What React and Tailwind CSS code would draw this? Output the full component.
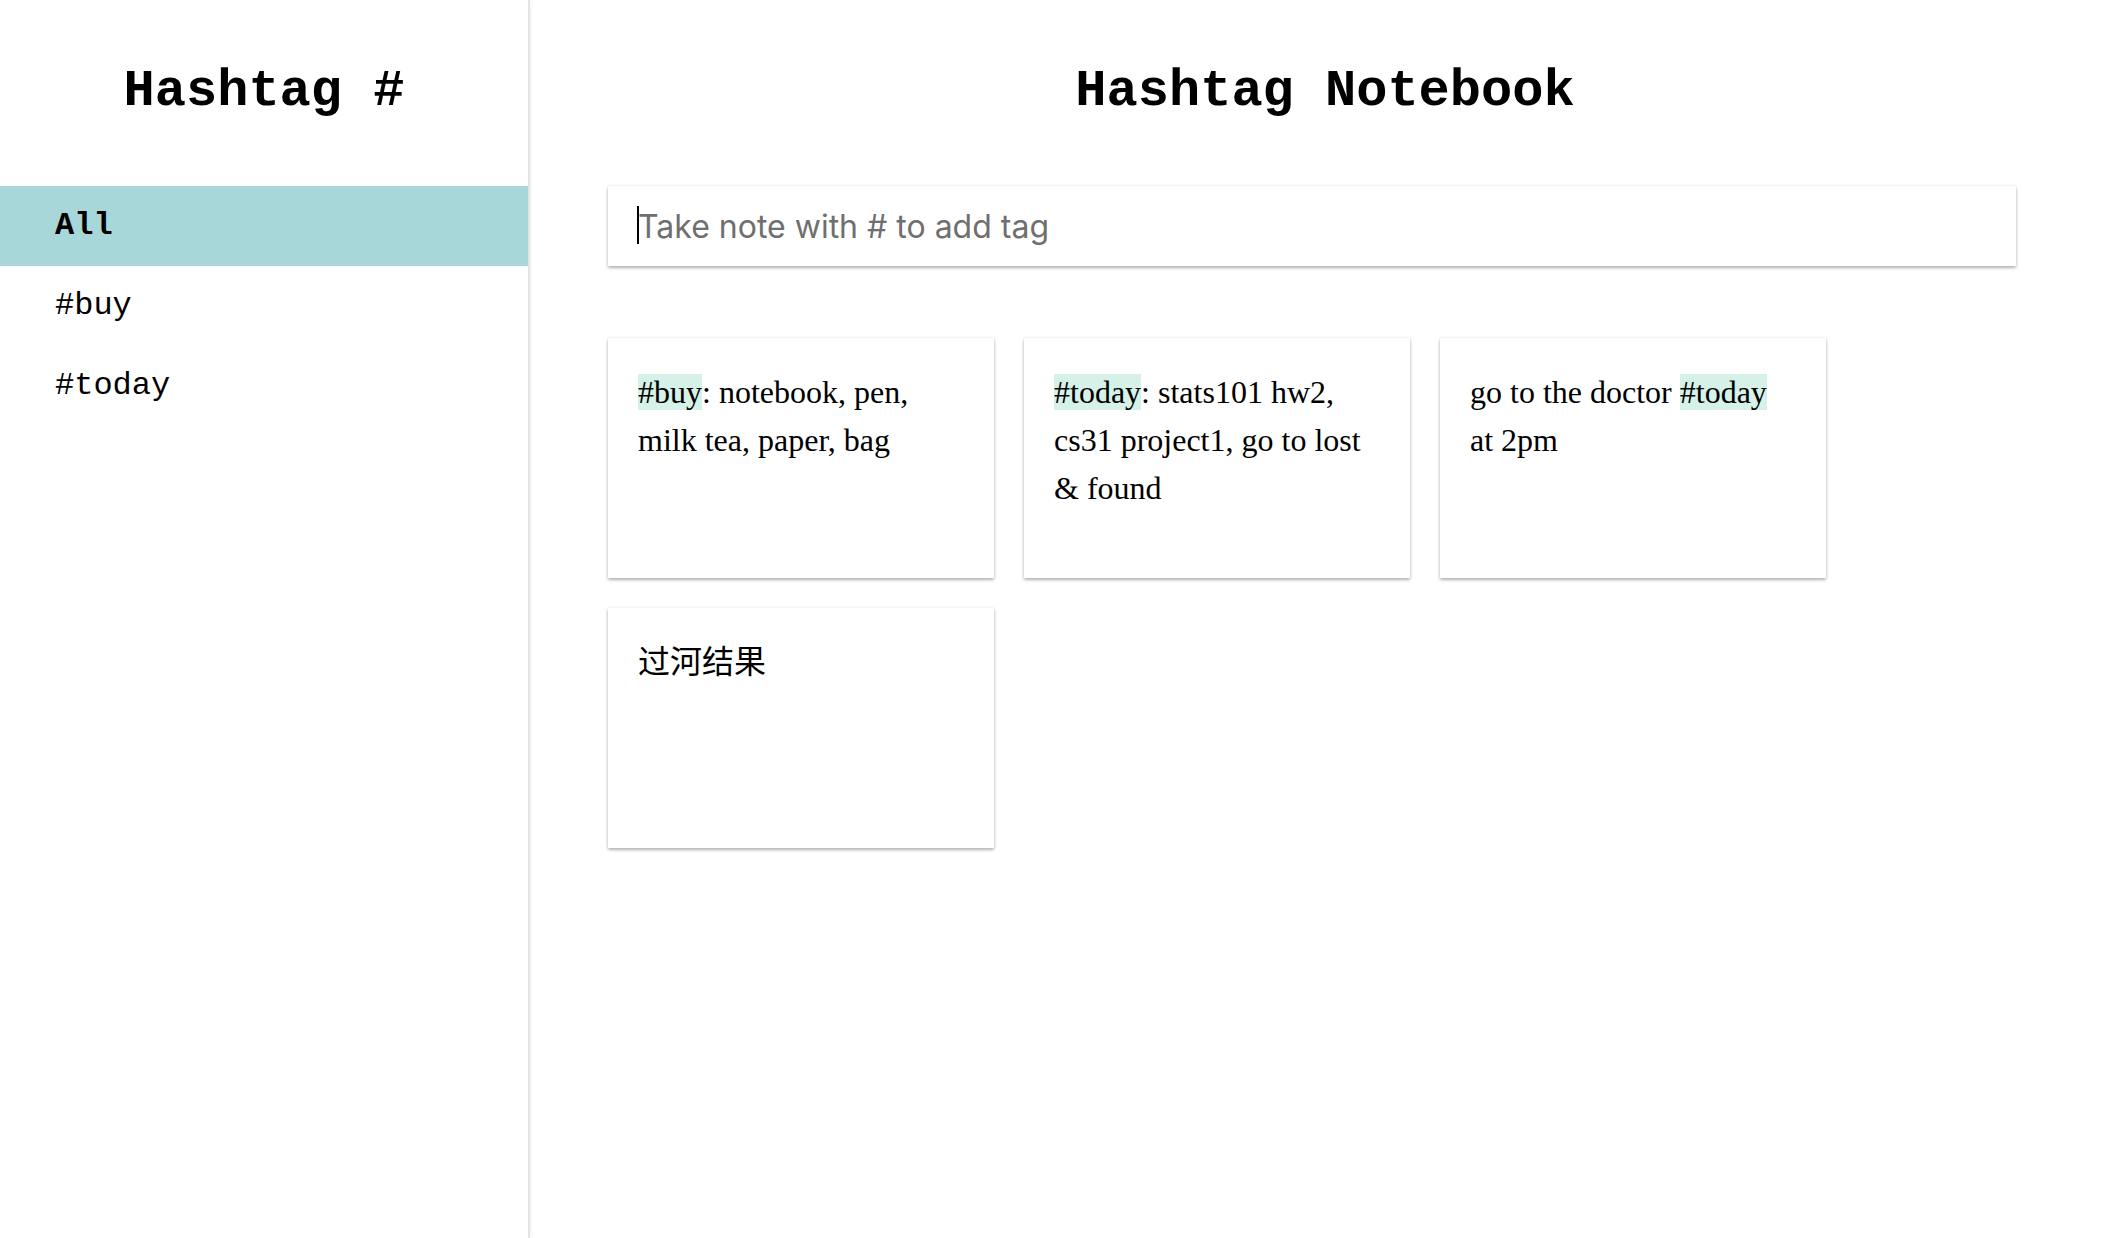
import React, { useState } from 'react';

const mono = 'font-["Liberation_Mono","Courier_New",monospace]';
const serif = 'font-["Liberation_Serif","Times_New_Roman","Noto_Sans_CJK_SC",serif]';

const tags = ['All', '#buy', '#today'];

const notes = [
  [{ tag: '#buy' }, ': notebook, pen, milk tea, paper, bag'],
  [{ tag: '#today' }, ': stats101 hw2, cs31 project1, go to lost & found'],
  ['go to the doctor ', { tag: '#today' }, ' at 2pm'],
  ['过河结果'],
];

function Note({ parts }) {
  return (
    <div className="w-[386px] h-[240px] bg-white p-[30px] shadow-[0_2px_3px_rgba(0,0,0,0.28),0_0_4px_rgba(0,0,0,0.07)]">
      <p className={`${serif} text-[32px] leading-[48px] text-black`}>
        {parts.map((p, i) =>
          typeof p === 'string' ? (
            <span key={i}>{p}</span>
          ) : (
            <span key={i} className="bg-[#d5f1e8]">{p.tag}</span>
          )
        )}
      </p>
    </div>
  );
}

export default function App() {
  const [active, setActive] = useState('All');
  const [text, setText] = useState('');

  return (
    <div className="flex min-h-[1238px] bg-white text-black">
      <aside className="w-[530px] shrink-0 border-r-2 border-[#e4e4e4] shadow-[2px_0_3px_rgba(0,0,0,0.04)]">
        <div className="h-[186px] flex items-center justify-center pb-[2px]">
          <h1 className={`${mono} text-[52px] leading-none font-bold`}>Hashtag #</h1>
        </div>
        <ul>
          {tags.map((t) => (
            <li
              key={t}
              onClick={() => setActive(t)}
              className={`${mono} h-[80px] flex items-center pl-[55px] text-[32px] cursor-pointer ${
                active === t ? 'bg-[#a8d7d9] font-bold' : ''
              }`}
            >
              {t}
            </li>
          ))}
        </ul>
      </aside>

      <main className="flex-1">
        <div className="h-[186px] flex items-center justify-center pb-[2px] pl-[6px]">
          <h1 className={`${mono} text-[52px] leading-none font-bold`}>Hashtag Notebook</h1>
        </div>
        <div className="pl-[78px] pr-[98px]">
          <div className="relative">
            <input
              value={text}
              onChange={(e) => setText(e.target.value)}
              placeholder="Take note with # to add tag"
              className="block w-full h-[80px] px-[30px] bg-white outline-none font-['Inter',sans-serif] text-[32px] text-black placeholder:text-[#6f6f6f] caret-black shadow-[0_2px_3px_rgba(0,0,0,0.28),0_0_4px_rgba(0,0,0,0.07)]"
            />
            {text === '' && (
              <span className="absolute left-[29px] top-[20px] h-[38px] w-[2px] bg-black pointer-events-none" />
            )}
          </div>
          <div className="mt-[72px] flex flex-wrap gap-[30px]">
            {notes.map((n, i) => (
              <Note key={i} parts={n} />
            ))}
          </div>
        </div>
      </main>
    </div>
  );
}
